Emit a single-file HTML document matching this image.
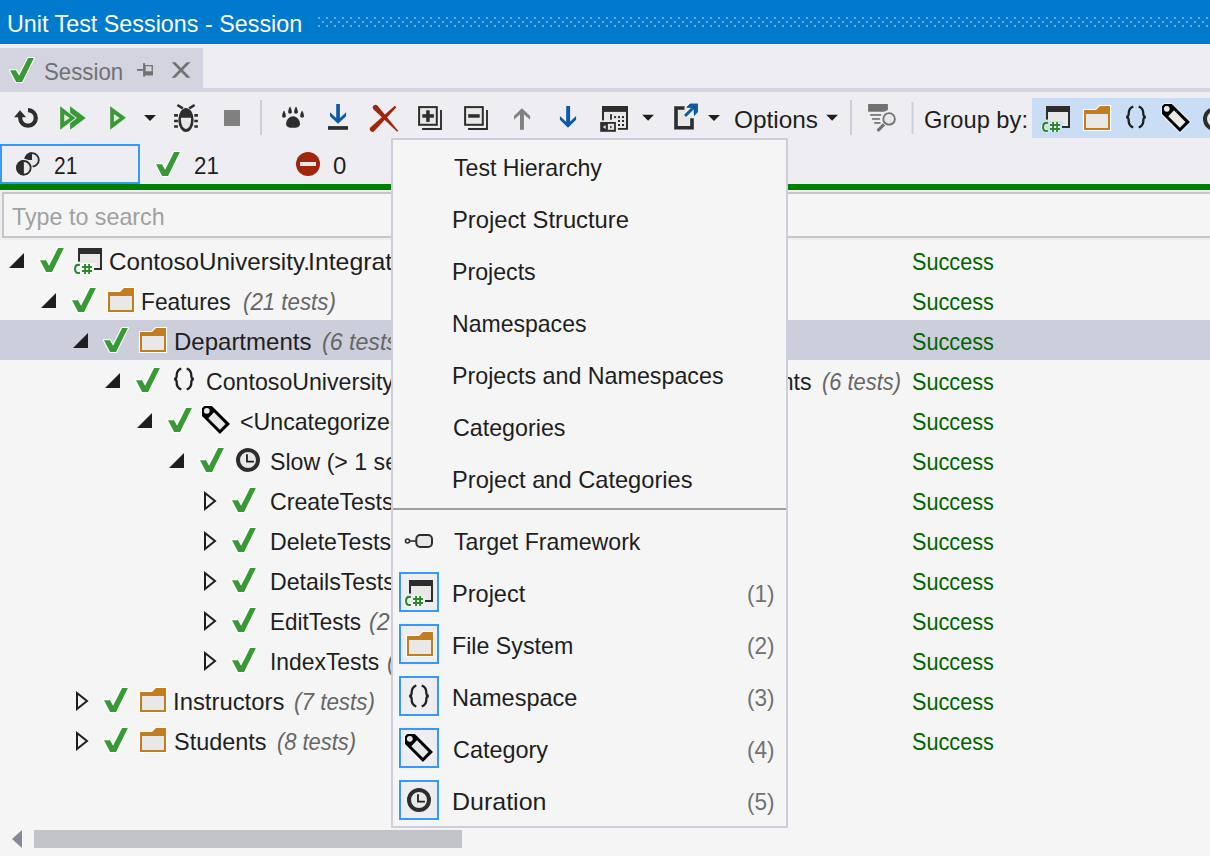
<!DOCTYPE html>
<html><head><meta charset="utf-8">
<style>
*{margin:0;padding:0;box-sizing:border-box}
html,body{width:1210px;height:856px;overflow:hidden;background:#F5F5F5;font-family:"Liberation Sans",sans-serif;font-size:24px;color:#1E1E1E}
.a{position:absolute}
.t{position:absolute;white-space:pre;transform-origin:0 50%}
svg{position:absolute;overflow:visible}
.ok{color:#006400}
.gr{color:#717171;font-style:italic}
</style></head><body>
<svg width="0" height="0" style="position:absolute">
<defs>
<symbol id="chk" viewBox="0 0 24 24" overflow="visible"><polygon points="0,12.3 6,12.3 9.1,17.7 18.1,0 23.9,0 12.1,24 6.1,24" fill="#389A34" stroke="#fff" stroke-opacity="0.95" stroke-width="2.2" stroke-linejoin="round" style="paint-order:stroke"/></symbol>
<symbol id="tdn" viewBox="0 0 15 15"><polygon points="15,0 15,15 0,15" fill="#1E1E1E"/></symbol>
<symbol id="trt" viewBox="0 0 13 20" overflow="visible"><polygon points="1,2 11,10 1,18" fill="none" stroke="#1E1E1E" stroke-width="2"/></symbol>
<symbol id="cs" viewBox="0 0 28 26" overflow="visible">
 <polygon points="6,6 26,6 26,20 21,20 21,15 6,15" fill="#E8E8E8"/>
 <rect x="4" y="0" width="24" height="6" fill="#2D2D2D"/><rect x="4" y="6" width="2" height="7.6" fill="#2D2D2D"/><rect x="26" y="6" width="2" height="16" fill="#2D2D2D"/><rect x="20" y="20" width="8" height="2" fill="#2D2D2D"/>
 <path d="M5.9,16.9 H4.2 C2.4,16.9 1.1,18.6 1.1,21 C1.1,23.4 2.4,25 4.2,25 H5.9 M11.05,15.9 V26 M15.1,15.9 V26 M8,19.05 H18 M8,23.05 H18" fill="none" stroke="#fff" stroke-opacity="0.8" stroke-width="3.6"/>
 <path d="M5.9,16.9 H4.2 C2.4,16.9 1.1,18.6 1.1,21 C1.1,23.4 2.4,25 4.2,25 H5.9" fill="none" stroke="#2A8A2A" stroke-width="2.1"/>
 <path d="M11.05,15.9 V26 M15.1,15.9 V26 M8,19.05 H18 M8,23.05 H18" stroke="#2A8A2A" stroke-width="1.9"/>
</symbol>
<symbol id="folder" viewBox="0 0 26 24" overflow="visible"><polygon points="0,4 12,4 16,0 26,0 26,24 0,24" fill="#C27D1E" stroke="#fff" stroke-opacity="0.95" stroke-width="2.2" style="paint-order:stroke"/><rect x="2" y="8" width="22" height="14" fill="#E8E8E8"/></symbol>
<symbol id="ns" viewBox="0 0 20 22" overflow="visible"><path d="M7.3,0.5 C3,2 2.5,6 2.6,8.5 C2.5,10 1.5,10.8 0.3,11 C1.5,11.2 2.5,12 2.6,13.5 C2.5,16 3,20 7.3,21.5 M12.7,0.5 C17,2 17.5,6 17.4,8.5 C17.5,10 18.5,10.8 19.7,11 C18.5,11.2 17.5,12 17.4,13.5 C17.5,16 17,20 12.7,21.5" fill="none" stroke="#1E1E1E" stroke-width="2.3"/></symbol>
<symbol id="tag" viewBox="0 0 28 28" overflow="visible"><polygon points="0,2.3 2.3,0 9.9,0 28,18.1 17.9,28 0,10.1" fill="#000" stroke="#fff" stroke-opacity="0.8" stroke-width="1.6" style="paint-order:stroke"/><circle cx="4.8" cy="4.8" r="2.9" fill="#E8E8E8"/><polygon points="6.3,12.2 12,6.3 23.5,18.1 17.9,23.8" fill="#E8E8E8"/></symbol>
<symbol id="clock" viewBox="0 0 24 24"><circle cx="12" cy="12" r="10" fill="#E8E8E8" stroke="#2D2D2D" stroke-width="4"/><path d="M11,6.2 V13.6 H17.9" fill="none" stroke="#1E1E1E" stroke-width="1.8"/></symbol>
</defs></svg>
<div class="a" style="left:0;top:0;width:1210px;height:44px;background:#007ACC"></div>
<div class="t" id="title" style="left:7.36px;top:4px;line-height:40px;height:40px;color:#fff;transform:scaleX(0.9720)">Unit Test Sessions - Session</div>
<svg style="left:318px;top:17px" width="892" height="10"><defs><pattern id="dp" width="8" height="8" patternUnits="userSpaceOnUse"><rect x="0" y="0" width="2" height="2" fill="#66ADE0"/><rect x="4" y="4" width="2" height="2" fill="#66ADE0"/></pattern></defs><rect width="892" height="10" fill="url(#dp)"/></svg>
<div class="a" style="left:0;top:44px;width:1210px;height:196px;background:#EEEEF2"></div>
<div class="a" style="left:0;top:48px;width:203px;height:40px;background:#D3D4DF"></div>
<div class="a" style="left:0;top:88px;width:1210px;height:4px;background:#D3D4DF"></div>
<svg style="left:10px;top:58px" width="24" height="24"><use href="#chk" width="24" height="24"/></svg>
<div class="t" id="tabtxt" style="left:44.07px;top:52px;line-height:40px;height:40px;color:#717171;transform:scaleX(0.9277)">Session</div>
<svg style="left:0;top:0" width="200" height="90"><rect x="137" y="69" width="6.4" height="1.8" fill="#717171"/><rect x="143.1" y="63.1" width="1.9" height="13.5" fill="#717171"/><path d="M145,65.65 H152.25 V74.8 H145 Z" fill="none" stroke="#717171" stroke-width="1.3"/><rect x="145" y="71.3" width="7.9" height="3.5" fill="#717171"/><polygon points="171.6,62.3 175.4,62.3 190.5,77.7 186.7,77.7" fill="#717171"/><polygon points="186.7,62.3 190.5,62.3 175.4,77.7 171.6,77.7" fill="#717171"/></svg>
<svg style="left:0;top:0" width="1210" height="140"><path d="M28,110.1 A7.8,7.8 0 1 1 20.2,117.9 V116.5" fill="none" stroke="#2D2D2D" stroke-width="4.2"/><polygon points="14.1,117.2 26.1,117.2 20,110.3" fill="#2D2D2D"/><polygon points="70.1,106.3 85.7,118 70.1,129.8" fill="#389A34"/><polygon points="60.2,106.3 75.4,118 60.2,129.8" fill="#389A34" stroke="#EEEEF2" stroke-width="1.8" style="paint-order:stroke"/><polygon points="64.2,114.2 69.8,118 64.2,121.8" fill="#E8E8E8"/><polygon points="110.2,106.2 125.9,117.8 110.2,129.8" fill="#389A34"/><polygon points="113.9,114 119.7,118 113.9,121.9" fill="#E8E8E8"/><polygon points="144,115 156,115 150,121" fill="#1E1E1E"/><path d="M177.4,105 L182.8,108.4 M194.6,105 L189.2,108.4" stroke="#2D2D2D" stroke-width="2.6"/><ellipse cx="186" cy="119.95" rx="7.65" ry="11.95" fill="#2D2D2D"/><path d="M180.95,117.7 H191.05 V119.9 A5.05,9 0 0 1 180.95,119.9 Z" fill="#E8E8E8"/><path d="M174.1,115.3 H177.9 M174.1,121 H177.9 M174.1,126.5 H177.9 M194.3,115.3 H197.9 M194.3,121 H197.9 M194.3,126.5 H197.9" stroke="#2D2D2D" stroke-width="2.7"/><rect x="224" y="110" width="16" height="16" fill="#808080"/><rect x="260" y="100" width="2" height="35" fill="#CCCEDB"/><path d="M286.1,124 C286.1,119 290,116.2 293,116.2 C296,116.2 300,119 300,124 C300,127 297,127.8 293,127.8 C289,127.8 286.1,127 286.1,124 Z" fill="#2D2D2D"/><path d="M284,110.5 C285,112.0 285.9,114.5 285.9,116.0 C285.9,117.2 285,117.7 284,117.7 C283,117.7 282.1,117.2 282.1,116.0 C282.1,114.5 283,112.0 284,110.5 Z" fill="#2D2D2D"/><path d="M290,106.5 C291,108.0 291.9,110.5 291.9,112.0 C291.9,113.2 291,113.7 290,113.7 C289,113.7 288.1,113.2 288.1,112.0 C288.1,110.5 289,108.0 290,106.5 Z" fill="#2D2D2D"/><path d="M296,106.5 C297,108.0 297.9,110.5 297.9,112.0 C297.9,113.2 297,113.7 296,113.7 C295,113.7 294.1,113.2 294.1,112.0 C294.1,110.5 295,108.0 296,106.5 Z" fill="#2D2D2D"/><path d="M302.1,110.5 C303.1,112.0 304.0,114.5 304.0,116.0 C304.0,117.2 303.1,117.7 302.1,117.7 C301.1,117.7 300.20000000000005,117.2 300.20000000000005,116.0 C300.20000000000005,114.5 301.1,112.0 302.1,110.5 Z" fill="#2D2D2D"/><rect x="328" y="126.1" width="20" height="3.7" fill="#2D2D2D"/><rect x="336.2" y="104" width="3.7" height="16" fill="#0E5AA7"/><polygon points="330,112.2 330,116.2 338,123.8 346.1,116.2 346.1,112.2 338,119.8" fill="#0E5AA7"/><path d="M394.8,105.7 L396.4,107.2 L374.4,131 A2.6,2.6 0 0 1 370.6,127.2 Z" fill="#A1260D"/><path d="M377.4,105.6 L398.3,131 L397.2,131.8 L373.6,109.4 A2.6,2.6 0 0 1 377.4,105.6 Z" fill="#A1260D"/><rect x="419.1" y="107.1" width="17.7" height="17.7" fill="#E8E8E8" stroke="#2D2D2D" stroke-width="2"/><rect x="422.3" y="114.2" width="11.6" height="3.5" fill="#2D2D2D"/><rect x="426.2" y="110.3" width="3.5" height="11.6" fill="#2D2D2D"/><path d="M441,110.1 V129 H422.1" fill="none" stroke="#2D2D2D" stroke-width="1.9"/><rect x="465.1" y="107.1" width="17.7" height="17.7" fill="#E8E8E8" stroke="#2D2D2D" stroke-width="2"/><rect x="468.2" y="114.2" width="11.5" height="3.5" fill="#2D2D2D"/><path d="M487,110.1 V129 H468.1" fill="none" stroke="#2D2D2D" stroke-width="1.9"/><rect x="520" y="110" width="3.9" height="19.8" fill="#808080"/><polygon points="521.9,108.3 530.1,115.9 530.1,119.8 521.9,112.5 514,119.8 514,115.9" fill="#808080"/><rect x="566.2" y="106" width="3.9" height="18" fill="#0E5AA7"/><polygon points="559.9,115.9 568,123.4 576.1,115.9 576.1,119.8 568,127.8 559.9,119.8" fill="#0E5AA7"/><rect x="602" y="106" width="26" height="23.8" fill="#2D2D2D"/><rect x="604" y="111.9" width="22" height="16.1" fill="#E8E8E8"/><rect x="610.1" y="114.1" width="1.8" height="5.6" fill="#2D2D2D"/><rect x="614.1" y="116.1" width="2" height="2" fill="#2D2D2D"/><rect x="618" y="116.1" width="2" height="2" fill="#2D2D2D"/><rect x="618" y="120" width="2" height="2" fill="#2D2D2D"/><rect x="618" y="124" width="2" height="2" fill="#2D2D2D"/><rect x="622" y="116.1" width="2" height="2" fill="#2D2D2D"/><rect x="622" y="120" width="2" height="2" fill="#2D2D2D"/><rect x="622" y="124" width="2" height="2" fill="#2D2D2D"/><rect x="598.7" y="120.4" width="19.2" height="13" fill="#EEEEF2"/><rect x="600.2" y="122" width="15.7" height="9.8" fill="#2D2D2D"/><rect x="607.9" y="123.8" width="6.2" height="6" fill="#E8E8E8"/><polygon points="602.6,127 605.8,125 605.8,129" fill="#D0D0D0"/><polygon points="610.1,125.4 610.1,128.6 612.3,127" fill="#2D2D2D"/><polygon points="642.2,114.8 654,114.8 648.1,120.7" fill="#1E1E1E"/><rect x="677.7" y="109.7" width="12.3" height="16.3" fill="#E8E8E8"/><path d="M684.7,106.2 H674.2 V129.6 H693.8 V118.3 H690.2 V126 H677.8 V109.8 H684.7 Z" fill="#2D2D2D"/><polygon points="686.3,107.5 690.2,103.8 697.8,103.8 697.8,111.9 694,115.9 693.8,109.9 691.8,107.9" fill="#0E5AA7" stroke="#EEEEF2" stroke-width="2" style="paint-order:stroke"/><path d="M685,116 L692.5,108.5" stroke="#EEEEF2" stroke-width="5.5"/><path d="M685,116 L692.5,108.5" stroke="#0E5AA7" stroke-width="3"/><polygon points="686.3,107.5 690.2,103.8 697.8,103.8 697.8,111.9 694,115.9 693.8,109.9 691.8,107.9" fill="#0E5AA7"/><polygon points="708,115 720,115 714,121" fill="#1E1E1E"/><polygon points="826.2,114.8 838,114.8 832.1,120.8" fill="#1E1E1E"/><rect x="850" y="100" width="2" height="35" fill="#CCCEDB"/><polygon points="868.1,104 887.9,104 887.9,110 884,111.8 868.1,111.8" fill="#717171"/><rect x="870.2" y="114.1" width="10.9" height="1.7" fill="#717171"/><rect x="872.1" y="118.1" width="7.8" height="1.7" fill="#717171"/><rect x="874.2" y="122.1" width="6.3" height="1.7" fill="#717171"/><circle cx="889.1" cy="118.9" r="5.8" fill="#E8E8E8" stroke="#717171" stroke-width="1.8"/><path d="M884,124.4 L877.6,130.9" stroke="#717171" stroke-width="3"/><rect x="911.5" y="102" width="2" height="32" fill="#CCCEDB"/></svg>
<div class="t" id="options" style="left:733.98px;top:100px;line-height:40px;height:40px;;transform:scaleX(1.0160)">Options</div>
<div class="t" id="groupby" style="left:924.41px;top:100px;line-height:40px;height:40px;;transform:scaleX(0.9864)">Group by:</div>
<div class="a" style="left:1032px;top:98px;width:178px;height:40px;background:#C9DEF5"></div>
<svg style="left:1042px;top:106px" width="28" height="26"><use href="#cs" width="28" height="26"/></svg>
<svg style="left:1084px;top:106px" width="26" height="24"><use href="#folder" width="26" height="24"/></svg>
<svg style="left:1126px;top:106px" width="20" height="22"><use href="#ns" width="20" height="22"/></svg>
<svg style="left:1162px;top:104px" width="28" height="28"><use href="#tag" width="28" height="28"/></svg>
<svg style="left:1203px;top:107px" width="24" height="24"><use href="#clock" width="24" height="24"/></svg>
<div class="a" style="left:0;top:144px;width:140px;height:40px;border:2px solid #3399FF"></div>
<svg style="left:0;top:0" width="60" height="190"><circle cx="32" cy="159.9" r="6.8" fill="#E8E8E8" stroke="#2D2D2D" stroke-width="1.8"/><path d="M32,159.9 V152.2 A7.7,7.7 0 0 0 24.3,159.9 Z" fill="#2D2D2D"/><circle cx="23.9" cy="167.8" r="9" fill="#EEEEF2"/><circle cx="23.9" cy="167.8" r="6.8" fill="#E8E8E8" stroke="#2D2D2D" stroke-width="1.8"/><path d="M23.9,160 A7.7,7.7 0 0 0 23.9,175.5 Z" fill="#2D2D2D"/></svg>
<div class="t" id="n21a" style="left:54.03px;top:146px;line-height:40px;height:40px;;transform:scaleX(0.8720)">21</div>
<svg style="left:156px;top:152px" width="24" height="24"><use href="#chk" width="24" height="24"/></svg>
<div class="t" id="n21b" style="left:193.77px;top:146px;line-height:40px;height:40px;;transform:scaleX(0.9320)">21</div>
<svg style="left:296px;top:152px" width="24" height="24"><circle cx="12" cy="12" r="12" fill="#A1260D"/><rect x="4" y="10" width="16" height="4" fill="#E8E8E8"/></svg>
<div class="t" id="zero" style="left:333.00px;top:146px;line-height:40px;height:40px;;transform:scaleX(1.0000)">0</div>
<div class="a" style="left:0;top:184px;width:1210px;height:6px;background:#008000"></div>
<div class="a" style="left:2px;top:192px;width:1208px;height:46px;border:2px solid #C6C6C6;border-right:none;background:#F5F5F5"></div>
<div class="t" id="search" style="left:12.30px;top:197px;line-height:40px;height:40px;color:#A0A0A0;transform:scaleX(0.9699)">Type to search</div>
<div class="a" style="left:0;top:320px;width:1210px;height:40px;background:#CCCEDB"></div>
<svg style="left:9px;top:253px" width="15" height="15"><use href="#tdn" width="15" height="15"/></svg>
<svg style="left:40px;top:248px" width="24" height="24"><use href="#chk" width="24" height="24"/></svg>
<svg style="left:74px;top:248px" width="28" height="26"><use href="#cs" width="28" height="26"/></svg>
<div class="t" id="r0" style="left:108.99px;top:242px;line-height:40px;height:40px;;transform:scaleX(1.0066)">ContosoUniversity.</div>
<div class="t" id="s0" style="left:912.10px;top:242px;line-height:40px;height:40px;color:#006400;transform:scaleX(0.9022)">Success</div>
<svg style="left:41px;top:293px" width="15" height="15"><use href="#tdn" width="15" height="15"/></svg>
<svg style="left:72px;top:288px" width="24" height="24"><use href="#chk" width="24" height="24"/></svg>
<svg style="left:108px;top:288px" width="26" height="24"><use href="#folder" width="26" height="24"/></svg>
<div class="t" id="r1" style="left:141.49px;top:282px;line-height:40px;height:40px;;transform:scaleX(0.9473)">Features</div>
<div class="t" id="g1" style="left:242.86px;top:282px;line-height:40px;height:40px;color:#666666;font-style:italic;transform:scaleX(0.9276)">(21 tests)</div>
<div class="t" id="s1" style="left:912.10px;top:282px;line-height:40px;height:40px;color:#006400;transform:scaleX(0.9022)">Success</div>
<svg style="left:73px;top:333px" width="15" height="15"><use href="#tdn" width="15" height="15"/></svg>
<svg style="left:104px;top:328px" width="24" height="24"><use href="#chk" width="24" height="24"/></svg>
<svg style="left:140px;top:328px" width="26" height="24"><use href="#folder" width="26" height="24"/></svg>
<div class="t" id="r2" style="left:174.00px;top:322px;line-height:40px;height:40px;;transform:scaleX(1.0000)">Departments</div>
<div class="t" id="g2" style="left:322.32px;top:322px;line-height:40px;height:40px;color:#666666;font-style:italic;transform:scaleX(0.9650)">(6 tests)</div>
<div class="t" id="s2" style="left:912.10px;top:322px;line-height:40px;height:40px;color:#006400;transform:scaleX(0.9022)">Success</div>
<svg style="left:105px;top:373px" width="15" height="15"><use href="#tdn" width="15" height="15"/></svg>
<svg style="left:136px;top:368px" width="24" height="24"><use href="#chk" width="24" height="24"/></svg>
<svg style="left:174px;top:368px" width="20" height="22"><use href="#ns" width="20" height="22"/></svg>
<div class="t" id="r3" style="left:206.03px;top:362px;line-height:40px;height:40px;;transform:scaleX(0.9650)">ContosoUniversity.IntegrationTests</div>
<div class="t" id="s3" style="left:912.10px;top:362px;line-height:40px;height:40px;color:#006400;transform:scaleX(0.9022)">Success</div>
<svg style="left:137px;top:413px" width="15" height="15"><use href="#tdn" width="15" height="15"/></svg>
<svg style="left:168px;top:408px" width="24" height="24"><use href="#chk" width="24" height="24"/></svg>
<svg style="left:202px;top:406px" width="28" height="28"><use href="#tag" width="28" height="28"/></svg>
<div class="t" id="r4" style="left:239.84px;top:402px;line-height:40px;height:40px;;transform:scaleX(0.9650)">&lt;Uncategorized&gt;</div>
<div class="t" id="s4" style="left:912.10px;top:402px;line-height:40px;height:40px;color:#006400;transform:scaleX(0.9022)">Success</div>
<svg style="left:169px;top:453px" width="15" height="15"><use href="#tdn" width="15" height="15"/></svg>
<svg style="left:200px;top:448px" width="24" height="24"><use href="#chk" width="24" height="24"/></svg>
<svg style="left:236px;top:448px" width="24" height="24"><use href="#clock" width="24" height="24"/></svg>
<div class="t" id="r5" style="left:269.84px;top:442px;line-height:40px;height:40px;;transform:scaleX(0.9650)">Slow (&gt; 1 sec)</div>
<div class="t" id="s5" style="left:912.10px;top:442px;line-height:40px;height:40px;color:#006400;transform:scaleX(0.9022)">Success</div>
<svg style="left:204px;top:491px" width="13" height="20"><use href="#trt" width="13" height="20"/></svg>
<svg style="left:232px;top:488px" width="24" height="24"><use href="#chk" width="24" height="24"/></svg>
<div class="t" id="r6" style="left:269.84px;top:482px;line-height:40px;height:40px;;transform:scaleX(0.9650)">CreateTests</div>
<div class="t" id="g6" style="left:403.89px;top:482px;line-height:40px;height:40px;color:#666666;font-style:italic;transform:scaleX(0.9650)">(2 tests)</div>
<div class="t" id="s6" style="left:912.10px;top:482px;line-height:40px;height:40px;color:#006400;transform:scaleX(0.9022)">Success</div>
<svg style="left:204px;top:531px" width="13" height="20"><use href="#trt" width="13" height="20"/></svg>
<svg style="left:232px;top:528px" width="24" height="24"><use href="#chk" width="24" height="24"/></svg>
<div class="t" id="r7" style="left:270.25px;top:522px;line-height:40px;height:40px;;transform:scaleX(0.9650)">DeleteTests</div>
<div class="t" id="g7" style="left:402.37px;top:522px;line-height:40px;height:40px;color:#666666;font-style:italic;transform:scaleX(0.9650)">(2 tests)</div>
<div class="t" id="s7" style="left:912.10px;top:522px;line-height:40px;height:40px;color:#006400;transform:scaleX(0.9022)">Success</div>
<svg style="left:204px;top:571px" width="13" height="20"><use href="#trt" width="13" height="20"/></svg>
<svg style="left:232px;top:568px" width="24" height="24"><use href="#chk" width="24" height="24"/></svg>
<div class="t" id="r8" style="left:270.25px;top:562px;line-height:40px;height:40px;;transform:scaleX(0.9650)">DetailsTests</div>
<div class="t" id="g8" style="left:406.23px;top:562px;line-height:40px;height:40px;color:#666666;font-style:italic;transform:scaleX(0.9650)">(2 tests)</div>
<div class="t" id="s8" style="left:912.10px;top:562px;line-height:40px;height:40px;color:#006400;transform:scaleX(0.9022)">Success</div>
<svg style="left:204px;top:611px" width="13" height="20"><use href="#trt" width="13" height="20"/></svg>
<svg style="left:232px;top:608px" width="24" height="24"><use href="#chk" width="24" height="24"/></svg>
<div class="t" id="r9" style="left:270.29px;top:602px;line-height:40px;height:40px;;transform:scaleX(0.9344)">EditTests</div>
<div class="t" id="g9" style="left:369.01px;top:602px;line-height:40px;height:40px;color:#666666;font-style:italic;transform:scaleX(0.9650)">(2 tests)</div>
<div class="t" id="s9" style="left:912.10px;top:602px;line-height:40px;height:40px;color:#006400;transform:scaleX(0.9022)">Success</div>
<svg style="left:204px;top:651px" width="13" height="20"><use href="#trt" width="13" height="20"/></svg>
<svg style="left:232px;top:648px" width="24" height="24"><use href="#chk" width="24" height="24"/></svg>
<div class="t" id="r10" style="left:270.27px;top:642px;line-height:40px;height:40px;;transform:scaleX(0.9522)">IndexTests</div>
<div class="t" id="g10" style="left:386.91px;top:642px;line-height:40px;height:40px;color:#666666;font-style:italic;transform:scaleX(0.9650)">(2 tests)</div>
<div class="t" id="s10" style="left:912.10px;top:642px;line-height:40px;height:40px;color:#006400;transform:scaleX(0.9022)">Success</div>
<svg style="left:76px;top:691px" width="13" height="20"><use href="#trt" width="13" height="20"/></svg>
<svg style="left:104px;top:688px" width="24" height="24"><use href="#chk" width="24" height="24"/></svg>
<svg style="left:140px;top:688px" width="26" height="24"><use href="#folder" width="26" height="24"/></svg>
<div class="t" id="r11" style="left:173.01px;top:682px;line-height:40px;height:40px;;transform:scaleX(0.9936)">Instructors</div>
<div class="t" id="g11" style="left:294.47px;top:682px;line-height:40px;height:40px;color:#666666;font-style:italic;transform:scaleX(0.9341)">(7 tests)</div>
<div class="t" id="s11" style="left:912.10px;top:682px;line-height:40px;height:40px;color:#006400;transform:scaleX(0.9022)">Success</div>
<svg style="left:76px;top:731px" width="13" height="20"><use href="#trt" width="13" height="20"/></svg>
<svg style="left:104px;top:728px" width="24" height="24"><use href="#chk" width="24" height="24"/></svg>
<svg style="left:140px;top:728px" width="26" height="24"><use href="#folder" width="26" height="24"/></svg>
<div class="t" id="r12" style="left:174.02px;top:722px;line-height:40px;height:40px;;transform:scaleX(0.9763)">Students</div>
<div class="t" id="g12" style="left:277.39px;top:722px;line-height:40px;height:40px;color:#666666;font-style:italic;transform:scaleX(0.9118)">(8 tests)</div>
<div class="t" id="s12" style="left:912.10px;top:722px;line-height:40px;height:40px;color:#006400;transform:scaleX(0.9022)">Success</div>
<div class="t" id="r0b" style="left:308.23px;top:242px;line-height:40px;height:40px;;transform:scaleX(1.0350)">IntegrationTests</div>
<div class="t" id="r3b" style="left:678.80px;top:362px;line-height:40px;height:40px;;transform:scaleX(0.9650)">Departments</div>
<div class="t" id="g3b" style="left:822.39px;top:362px;line-height:40px;height:40px;color:#666666;font-style:italic;transform:scaleX(0.9106)">(6 tests)</div>
<svg style="left:12px;top:830px" width="10" height="18"><polygon points="10,0 10,18 0,9" fill="#868999"/></svg>
<div class="a" style="left:34px;top:830px;width:428px;height:18px;background:#C2C3C9"></div>
<div class="a" style="left:391px;top:138px;width:397px;height:690px;background:#F5F5F5;border:2px solid #CCCEDB"></div>
<div class="t" id="m0" style="left:454.00px;top:142px;line-height:52px;height:52px;;transform:scaleX(0.9643)">Test Hierarchy</div>
<div class="t" id="m1" style="left:452.02px;top:194px;line-height:52px;height:52px;;transform:scaleX(0.9898)">Project Structure</div>
<div class="t" id="m2" style="left:452.07px;top:246px;line-height:52px;height:52px;;transform:scaleX(0.9655)">Projects</div>
<div class="t" id="m3" style="left:452.08px;top:298px;line-height:52px;height:52px;;transform:scaleX(0.9601)">Namespaces</div>
<div class="t" id="m4" style="left:452.06px;top:350px;line-height:52px;height:52px;;transform:scaleX(0.9694)">Projects and Namespaces</div>
<div class="t" id="m5" style="left:453.03px;top:402px;line-height:52px;height:52px;;transform:scaleX(0.9687)">Categories</div>
<div class="t" id="m6" style="left:452.03px;top:454px;line-height:52px;height:52px;;transform:scaleX(0.9851)">Project and Categories</div>
<div class="a" style="left:393px;top:508px;width:393px;height:2px;background:#A0A0A0"></div>
<svg style="left:405px;top:534px" width="28" height="14"><circle cx="2.5" cy="7" r="2" fill="none" stroke="#2D2D2D" stroke-width="1.6"/><path d="M4.5,7 H12" stroke="#2D2D2D" stroke-width="1.6"/><rect x="11.3" y="1" width="15.7" height="12" rx="4" fill="#E8E8E8" stroke="#2D2D2D" stroke-width="2"/></svg>
<div class="t" id="p0" style="left:454.00px;top:516px;line-height:52px;height:52px;;transform:scaleX(0.9639)">Target Framework</div>
<div class="a" style="left:399px;top:572px;width:40px;height:40px;border:2px solid #3399FF;background:#EEEEF2"></div>
<svg style="left:405px;top:580px" width="28" height="26"><use href="#cs" width="28" height="26"/></svg>
<div class="t" id="p1" style="left:452.04px;top:568px;line-height:52px;height:52px;;transform:scaleX(0.9808)">Project</div>
<div class="t" id="k1" style="left:746.66px;top:568px;line-height:52px;height:52px;color:#717171;transform:scaleX(0.9407)">(1)</div>
<div class="a" style="left:399px;top:624px;width:40px;height:40px;border:2px solid #3399FF;background:#EEEEF2"></div>
<svg style="left:407px;top:632px" width="26" height="24"><use href="#folder" width="26" height="24"/></svg>
<div class="t" id="p2" style="left:452.07px;top:620px;line-height:52px;height:52px;;transform:scaleX(0.9672)">File System</div>
<div class="t" id="k2" style="left:746.66px;top:620px;line-height:52px;height:52px;color:#717171;transform:scaleX(0.9407)">(2)</div>
<div class="a" style="left:399px;top:676px;width:40px;height:40px;border:2px solid #3399FF;background:#EEEEF2"></div>
<svg style="left:409px;top:685px" width="20" height="22"><use href="#ns" width="20" height="22"/></svg>
<div class="t" id="p3" style="left:452.04px;top:672px;line-height:52px;height:52px;;transform:scaleX(0.9792)">Namespace</div>
<div class="t" id="k3" style="left:746.66px;top:672px;line-height:52px;height:52px;color:#717171;transform:scaleX(0.9407)">(3)</div>
<div class="a" style="left:399px;top:728px;width:40px;height:40px;border:2px solid #3399FF;background:#EEEEF2"></div>
<svg style="left:405px;top:734px" width="28" height="28"><use href="#tag" width="28" height="28"/></svg>
<div class="t" id="p4" style="left:453.02px;top:724px;line-height:52px;height:52px;;transform:scaleX(0.9763)">Category</div>
<div class="t" id="k4" style="left:746.66px;top:724px;line-height:52px;height:52px;color:#717171;transform:scaleX(0.9407)">(4)</div>
<div class="a" style="left:399px;top:780px;width:40px;height:40px;border:2px solid #3399FF;background:#EEEEF2"></div>
<svg style="left:407px;top:788px" width="24" height="24"><use href="#clock" width="24" height="24"/></svg>
<div class="t" id="p5" style="left:451.92px;top:776px;line-height:52px;height:52px;;transform:scaleX(1.0414)">Duration</div>
<div class="t" id="k5" style="left:746.66px;top:776px;line-height:52px;height:52px;color:#717171;transform:scaleX(0.9407)">(5)</div>
</body></html>
